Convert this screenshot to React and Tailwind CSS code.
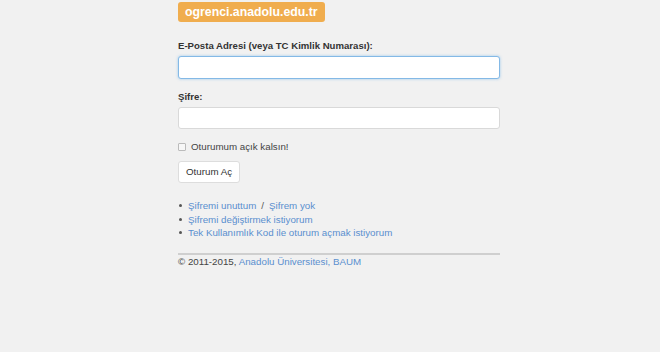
export default function App() {
    const links = [
        [['Şifremi unuttum', 'Şifrem yok']],
        [['Şifremi değiştirmek istiyorum']],
        [['Tek Kullanımlık Kod ile oturum açmak istiyorum']],
    ];

    return (
        <div className="min-h-[352px] bg-[#f1f1f1] text-[#333] font-['Liberation_Sans',Arial,sans-serif] text-[9.75px]">
            <div className="ml-[178px] w-[322px] pt-[2px]">
                {/* site badge */}
                <div className="inline-flex items-center h-[20px] px-[7px] rounded-[3px] bg-[#f0ad4e] text-white font-bold text-[12.3px]">
                    ogrenci.anadolu.edu.tr
                </div>

                <div className="mt-[17px] leading-[14px] font-bold text-[9.6px]">E-Posta Adresi (veya TC Kimlik Numarası):</div>
                <input
                    type="text"
                    className="mt-[3px] block w-full h-[23px] rounded-[3px] bg-white border border-[#84b9e6] shadow-[0_0_3px_rgba(102,175,233,0.6)] outline-none"
                />

                <div className="mt-[11px] leading-[14px] font-bold text-[9.6px]">Şifre:</div>
                <input
                    type="password"
                    className="mt-[3px] block w-full h-[22px] rounded-[3px] bg-white border border-[#d9d9d9] outline-none"
                />

                <label className="mt-[11px] flex items-center leading-[14px] text-[#444]">
                    <span className="w-[8px] h-[8px] border border-[#bbb] rounded-[1px] bg-[#f7f7f7] mr-[5px]"></span>
                    Oturumum açık kalsın!
                </label>

                <button className="mt-[7px] h-[22px] px-[7px] bg-white border border-[#ddd] rounded-[3px] text-[9.75px] text-[#333]">
                    Oturum Aç
                </button>

                <ul className="mt-[16px]">
                    {links.map((row, i) => (
                        <li key={i} className="flex items-center leading-[13.5px]">
                            <span className="w-[3px] h-[3px] rounded-full bg-[#555] ml-[1px] mr-[6px]"></span>
                            {row[0].map((t, j) => (
                                <span key={j}>
                                    {j > 0 && <span className="text-[#555] mx-[5px]">/</span>}
                                    <a href="#" className="text-[#5a8fcf]">{t}</a>
                                </span>
                            ))}
                        </li>
                    ))}
                </ul>

                <div className="mt-[13px] h-[2px] bg-[#cfcfcf]"></div>
                <div className="leading-[14px] text-[#444]">
                    © 2011-2015, <a href="#" className="text-[#5a8fcf]">Anadolu Üniversitesi, BAUM</a>
                </div>
            </div>
        </div>
    );
}
